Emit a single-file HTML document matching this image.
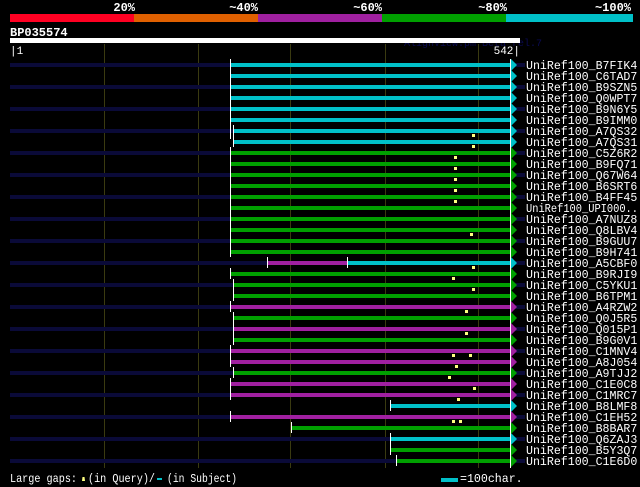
<!DOCTYPE html>
<html><head><meta charset="utf-8"><style>
html,body{margin:0;padding:0;background:#000;width:640px;height:487px;overflow:hidden}
svg{display:block}
text{font-family:"Liberation Mono","DejaVu Sans Mono",monospace;fill:#fff}
</style></head><body>
<svg width="640" height="487" viewBox="0 0 640 487" xmlns="http://www.w3.org/2000/svg">
<g font-weight="bold" font-size="12">
<text x="135" y="11" text-anchor="end">20%</text>
<text x="258" y="11" text-anchor="end">~40%</text>
<text x="382" y="11" text-anchor="end">~60%</text>
<text x="507" y="11" text-anchor="end">~80%</text>
<text x="631" y="11" text-anchor="end">~100%</text>
</g>
<rect x="10" y="14" width="124" height="8" fill="#ff0022"/>
<rect x="134" y="14" width="124" height="8" fill="#e06000"/>
<rect x="258" y="14" width="124" height="8" fill="#a020a0"/>
<rect x="382" y="14" width="124" height="8" fill="#00a000"/>
<rect x="506" y="14" width="127" height="8" fill="#00c0c8"/>
<text x="10" y="36" font-weight="bold" font-size="12">BP035574</text>
<text x="404" y="46" font-size="10" style="fill:#0a0a50">AlignView.pm Beta rel.7</text>
<rect x="10" y="38" width="510" height="5" fill="#fff"/>
<text x="10" y="54" font-size="11">|1</text>
<text x="520" y="54" font-size="11" text-anchor="end">542|</text>
<g stroke="#3a3a10" stroke-width="1">
<line x1="104.5" y1="44" x2="104.5" y2="468"/>
<line x1="198.5" y1="44" x2="198.5" y2="468"/>
<line x1="290.5" y1="44" x2="290.5" y2="468"/>
<line x1="385.5" y1="44" x2="385.5" y2="468"/>
<line x1="478.5" y1="44" x2="478.5" y2="468"/>
</g>
<g fill="#0a0a38">
<rect x="10" y="63" width="515" height="4"/><rect x="10" y="85" width="515" height="4"/><rect x="10" y="107" width="515" height="4"/><rect x="10" y="129" width="515" height="4"/><rect x="10" y="151" width="515" height="4"/><rect x="10" y="173" width="515" height="4"/><rect x="10" y="195" width="515" height="4"/><rect x="10" y="217" width="515" height="4"/><rect x="10" y="239" width="515" height="4"/><rect x="10" y="261" width="515" height="4"/><rect x="10" y="283" width="515" height="4"/><rect x="10" y="305" width="515" height="4"/><rect x="10" y="327" width="515" height="4"/><rect x="10" y="349" width="515" height="4"/><rect x="10" y="371" width="515" height="4"/><rect x="10" y="393" width="515" height="4"/><rect x="10" y="415" width="515" height="4"/><rect x="10" y="437" width="515" height="4"/><rect x="10" y="459" width="515" height="4"/>
</g>
<g>
<g fill="#00c0c8">
<rect x="231" y="63" width="280" height="4"/><polygon points="511,59 517,65 511,71"/>
<rect x="231" y="74" width="280" height="4"/><polygon points="511,70 517,76 511,82"/>
<rect x="231" y="85" width="280" height="4"/><polygon points="511,81 517,87 511,93"/>
<rect x="231" y="96" width="280" height="4"/><polygon points="511,92 517,98 511,104"/>
<rect x="231" y="107" width="280" height="4"/><polygon points="511,103 517,109 511,115"/>
<rect x="231" y="118" width="280" height="4"/><polygon points="511,114 517,120 511,126"/>
<rect x="234" y="129" width="277" height="4"/><polygon points="511,125 517,131 511,137"/>
<rect x="234" y="140" width="277" height="4"/><polygon points="511,136 517,142 511,148"/>
<rect x="348" y="261" width="163" height="4"/><polygon points="511,257 517,263 511,269"/>
<rect x="391" y="404" width="120" height="4"/><polygon points="511,400 517,406 511,412"/>
<rect x="391" y="437" width="120" height="4"/><polygon points="511,433 517,439 511,445"/>
</g>
<g fill="#00a000">
<rect x="231" y="151" width="280" height="4"/><polygon points="511,147 517,153 511,159"/>
<rect x="231" y="162" width="280" height="4"/><polygon points="511,158 517,164 511,170"/>
<rect x="231" y="173" width="280" height="4"/><polygon points="511,169 517,175 511,181"/>
<rect x="231" y="184" width="280" height="4"/><polygon points="511,180 517,186 511,192"/>
<rect x="231" y="195" width="280" height="4"/><polygon points="511,191 517,197 511,203"/>
<rect x="231" y="206" width="280" height="4"/><polygon points="511,202 517,208 511,214"/>
<rect x="231" y="217" width="280" height="4"/><polygon points="511,213 517,219 511,225"/>
<rect x="231" y="228" width="280" height="4"/><polygon points="511,224 517,230 511,236"/>
<rect x="231" y="239" width="280" height="4"/><polygon points="511,235 517,241 511,247"/>
<rect x="231" y="250" width="280" height="4"/><polygon points="511,246 517,252 511,258"/>
<rect x="231" y="272" width="280" height="4"/><polygon points="511,268 517,274 511,280"/>
<rect x="234" y="283" width="277" height="4"/><polygon points="511,279 517,285 511,291"/>
<rect x="234" y="294" width="277" height="4"/><polygon points="511,290 517,296 511,302"/>
<rect x="234" y="316" width="277" height="4"/><polygon points="511,312 517,318 511,324"/>
<rect x="234" y="338" width="277" height="4"/><polygon points="511,334 517,340 511,346"/>
<rect x="234" y="371" width="277" height="4"/><polygon points="511,367 517,373 511,379"/>
<rect x="292" y="426" width="219" height="4"/><polygon points="511,422 517,428 511,434"/>
<rect x="391" y="448" width="120" height="4"/><polygon points="511,444 517,450 511,456"/>
<rect x="397" y="459" width="114" height="4"/><polygon points="511,455 517,461 511,467"/>
</g>
<g fill="#a020a0">
<rect x="268" y="261" width="80" height="4"/>
<rect x="231" y="305" width="280" height="4"/><polygon points="511,301 517,307 511,313"/>
<rect x="234" y="327" width="277" height="4"/><polygon points="511,323 517,329 511,335"/>
<rect x="231" y="349" width="280" height="4"/><polygon points="511,345 517,351 511,357"/>
<rect x="231" y="360" width="280" height="4"/><polygon points="511,356 517,362 511,368"/>
<rect x="231" y="382" width="280" height="4"/><polygon points="511,378 517,384 511,390"/>
<rect x="231" y="393" width="280" height="4"/><polygon points="511,389 517,395 511,401"/>
<rect x="231" y="415" width="280" height="4"/><polygon points="511,411 517,417 511,423"/>
</g>
</g>
<g fill="#fff">
<rect x="230" y="59" width="1" height="80"/><rect x="233" y="125" width="1" height="22"/>
<rect x="230" y="147" width="1" height="110"/>
<rect x="267" y="257" width="1" height="11"/><rect x="347" y="257" width="1" height="11"/>
<rect x="230" y="268" width="1" height="11"/><rect x="233" y="279" width="1" height="22"/>
<rect x="230" y="301" width="1" height="11"/><rect x="233" y="312" width="1" height="33"/>
<rect x="230" y="345" width="1" height="22"/><rect x="233" y="367" width="1" height="11"/>
<rect x="230" y="378" width="1" height="22"/><rect x="390" y="400" width="1" height="11"/>
<rect x="230" y="411" width="1" height="11"/><rect x="291" y="422" width="1" height="11"/>
<rect x="390" y="433" width="1" height="22"/><rect x="396" y="455" width="1" height="11"/>
<rect x="510" y="59" width="1" height="409"/>
</g>
<g fill="#ffff80">
<rect x="472" y="134" width="3" height="3"/><rect x="472" y="145" width="3" height="3"/>
<rect x="454" y="156" width="3" height="3"/><rect x="454" y="167" width="3" height="3"/>
<rect x="454" y="178" width="3" height="3"/><rect x="454" y="189" width="3" height="3"/>
<rect x="454" y="200" width="3" height="3"/><rect x="470" y="233" width="3" height="3"/>
<rect x="472" y="266" width="3" height="3"/><rect x="452" y="277" width="3" height="3"/>
<rect x="472" y="288" width="3" height="3"/><rect x="465" y="310" width="3" height="3"/>
<rect x="465" y="332" width="3" height="3"/><rect x="452" y="354" width="3" height="3"/>
<rect x="469" y="354" width="3" height="3"/><rect x="455" y="365" width="3" height="3"/>
<rect x="448" y="376" width="3" height="3"/><rect x="473" y="387" width="3" height="3"/>
<rect x="457" y="398" width="3" height="3"/><rect x="452" y="420" width="3" height="3"/>
<rect x="459" y="420" width="3" height="3"/>
</g>
<g font-size="11.6">
<text x="526" y="69">UniRef100_B7FIK4</text>
<text x="526" y="80">UniRef100_C6TAD7</text>
<text x="526" y="91">UniRef100_B9SZN5</text>
<text x="526" y="102">UniRef100_Q0WPT7</text>
<text x="526" y="113">UniRef100_B9N6Y5</text>
<text x="526" y="124">UniRef100_B9IMM0</text>
<text x="526" y="135">UniRef100_A7QS32</text>
<text x="526" y="146">UniRef100_A7QS31</text>
<text x="526" y="157">UniRef100_C5Z6R2</text>
<text x="526" y="168">UniRef100_B9FQ71</text>
<text x="526" y="179">UniRef100_Q67W64</text>
<text x="526" y="190">UniRef100_B6SRT6</text>
<text x="526" y="201">UniRef100_B4FF45</text>
<text x="526" y="212" textLength="112" lengthAdjust="spacingAndGlyphs">UniRef100_UPI000..</text>
<text x="526" y="223">UniRef100_A7NUZ8</text>
<text x="526" y="234">UniRef100_Q8LBV4</text>
<text x="526" y="245">UniRef100_B9GUU7</text>
<text x="526" y="256">UniRef100_B9H741</text>
<text x="526" y="267">UniRef100_A5CBF0</text>
<text x="526" y="278">UniRef100_B9RJI9</text>
<text x="526" y="289">UniRef100_C5YKU1</text>
<text x="526" y="300">UniRef100_B6TPM1</text>
<text x="526" y="311">UniRef100_A4RZW2</text>
<text x="526" y="322">UniRef100_Q0J5R5</text>
<text x="526" y="333">UniRef100_Q015P1</text>
<text x="526" y="344">UniRef100_B9G0V1</text>
<text x="526" y="355">UniRef100_C1MNV4</text>
<text x="526" y="366">UniRef100_A8J054</text>
<text x="526" y="377">UniRef100_A9TJJ2</text>
<text x="526" y="388">UniRef100_C1E0C8</text>
<text x="526" y="399">UniRef100_C1MRC7</text>
<text x="526" y="410">UniRef100_B8LMF8</text>
<text x="526" y="421">UniRef100_C1EH52</text>
<text x="526" y="432">UniRef100_B8BAR7</text>
<text x="526" y="443">UniRef100_Q6ZAJ3</text>
<text x="526" y="454">UniRef100_B5Y3Q7</text>
<text x="526" y="465">UniRef100_C1E6D0</text>
</g>
<text x="10" y="482" font-size="11.6" textLength="67" lengthAdjust="spacingAndGlyphs">Large gaps:</text>
<polygon points="82,481 85,481 84.5,477 82.5,477" fill="#ffff80"/>
<text x="88" y="482" font-size="11.6" textLength="67" lengthAdjust="spacingAndGlyphs">(in Query)/</text>
<rect x="157" y="478" width="5" height="2" fill="#00c0c8"/>
<text x="167" y="482" font-size="11.6" textLength="70" lengthAdjust="spacingAndGlyphs">(in Subject)</text>
<rect x="441" y="478" width="17" height="4" fill="#00c0c8"/>
<text x="460" y="482" font-size="11.6">=100char.</text>
</svg>
</body></html>
